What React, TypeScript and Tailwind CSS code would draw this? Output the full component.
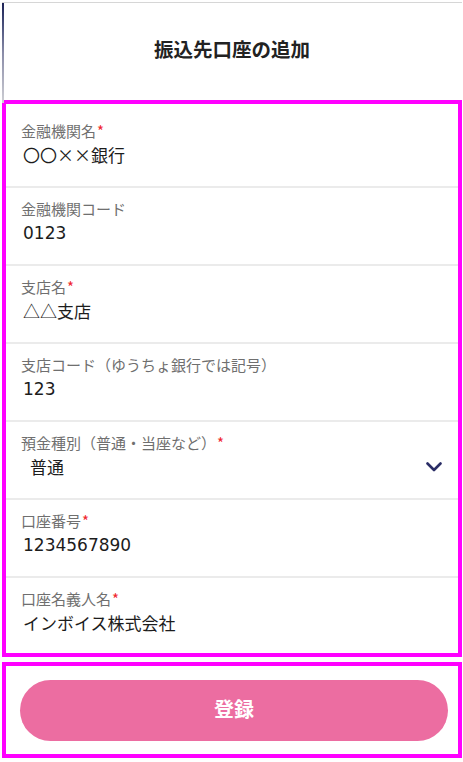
import React from "react";

interface Field {
    label: string;
    value: string;
    required?: boolean;
    select?: boolean;
}

const fields: Field[] = [
    { label: "金融機関名", value: "〇〇××銀行", required: true },
    { label: "金融機関コード", value: "0123" },
    { label: "支店名", value: "△△支店", required: true },
    { label: "支店コード（ゆうちょ銀行では記号）", value: "123" },
    { label: "預金種別（普通・当座など）", value: "普通", required: true, select: true },
    { label: "口座番号", value: "1234567890", required: true },
    { label: "口座名義人名", value: "インボイス株式会社", required: true },
];

const ChevronDown = () => (
    <svg width="16" height="10" viewBox="0 0 16 10" fill="none">
        <path d="M1.5 1.5 L8 8 L14.5 1.5" stroke="#2a2d66" strokeWidth="2.6" strokeLinecap="round" strokeLinejoin="round" />
    </svg>
);

const FieldRow = ({ field, last }: { field: Field; last: boolean }) => {
    // numbers in the original render with a wide latin face
    const numeric = /^[0-9]+$/.test(field.value);

    return (
        <div
            className={`flex flex-col pl-[15px] pt-[11px] ${
                last ? "h-[75px]" : "h-[78px] border-b-2 border-[#ebebeb]"
            }`}
        >
            {/* Label */}
            <div className="text-[15px] leading-[20px] text-[#6f6f6f]">
                {field.label}
                {field.required && <span className="text-[#f0262d] ml-[1px]">*</span>}
            </div>
            {/* Value */}
            <div className="mt-[2px] flex items-center justify-between pr-[16px]">
                <span
                    className={`text-[17px] leading-[24px] text-[#1c1c1c] ${field.select ? "pl-[9px]" : "pl-[2px]"} ${
                        numeric ? "font-['DejaVu_Sans',sans-serif]" : ""
                    }`}
                >
                    {field.value}
                </span>
                {field.select && <ChevronDown />}
            </div>
        </div>
    );
};

export default function App() {
    return (
        <div
            className="w-[463px] min-h-[762px] bg-white pt-[2px] pl-[2px] pr-[1px]"
            style={{ fontFamily: '"Noto Sans CJK JP", "Noto Sans", sans-serif' }}
        >
            <div className="relative border-t border-[#d6d6d6]">
                {/* left edge */}
                <div className="absolute left-0 top-0 h-[100px] w-[1.5px] bg-gradient-to-b from-[#1d2256] via-[#8a8ca8] to-[#cfcfd4]" />

                {/* Header */}
                <div className="flex h-[97px] items-center justify-center pb-[6px]">
                    <h1 className="text-[19.5px] font-bold text-[#222]">振込先口座の追加</h1>
                </div>

                {/* Form fields */}
                <div className="border-4 border-[#ff00ff] pt-[6px]">
                    {fields.map((f, i) => (
                        <FieldRow key={f.label} field={f} last={i === fields.length - 1} />
                    ))}
                </div>

                {/* Footer */}
                <div className="mt-[5px] border-4 border-[#ff00ff] pt-[14px] pb-[13px] pl-[14px] pr-[10px]">
                    <button className="flex h-[61px] w-full items-center justify-center rounded-full bg-[#ec6da1] pb-[3px] text-[20px] font-bold text-white">
                        登録
                    </button>
                </div>
            </div>
        </div>
    );
}
